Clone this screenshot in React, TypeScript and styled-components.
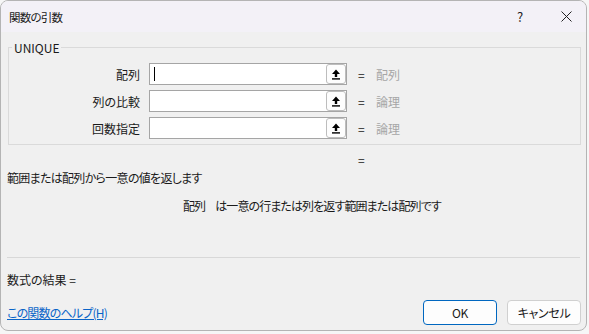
import React from 'react';
import styled, { createGlobalStyle } from 'styled-components';

const GlobalStyle = createGlobalStyle`
  html, body {
    margin: 0;
    padding: 0;
    background: #f6f6f6;
  }
  body {
    font-family: "Noto Sans CJK JP", "Noto Sans", sans-serif;
    font-size: 12px;
    color: #1a1a1a;
    font-feature-settings: "palt";
  }
`;

const Window = styled.div`
  width: 587px;
  height: 331px;
  box-sizing: border-box;
  border: 1px solid #b4b4b4;
  border-radius: 8px;
  overflow: hidden;
  background: #f0f0f0;
  display: flex;
  flex-direction: column;
`;

const TitleBar = styled.div`
  height: 31px;
  flex-shrink: 0;
  display: flex;
  align-items: center;
  padding: 0 0 0 8px;
  background: #f3f1f7;
`;

const Title = styled.div`
  flex: 1;
  font-size: 11.5px;
  letter-spacing: -0.8px;
`;

const TitleButton = styled.div<{ $w: number }>`
  width: ${(p) => p.$w}px;
  height: 31px;
  display: flex;
  align-items: center;
  justify-content: center;
  font-size: 13px;
  color: #222;
`;

const Body = styled.div`
  flex: 1;
  display: flex;
  flex-direction: column;
  padding: 15px 5px 0 5px;
`;

const GroupBox = styled.div`
  position: relative;
  margin-left: 2px;
  border: 1px solid #dadada;
  padding: 15px 0 5px 0;
`;

const Legend = styled.div`
  position: absolute;
  top: -9px;
  left: 3px;
  padding: 0 2px;
  background: #f0f0f0;
  line-height: 18px;
  font-size: 12px;
`;

const ArgGrid = styled.div`
  display: grid;
  grid-template-columns: 131px 198px 11px 1fr;
  column-gap: 9px;
  row-gap: 5px;
  align-items: center;
`;

const ArgLabel = styled.div`
  text-align: right;
  font-size: 12px;
`;

const InputBox = styled.div`
  height: 22px;
  box-sizing: border-box;
  border: 1px solid #a5a5a5;
  background: #fff;
  display: flex;
  align-items: center;
  justify-content: space-between;
`;

const Caret = styled.span`
  width: 1px;
  height: 14px;
  margin-left: 4px;
  background: #000;
`;

const RefButton = styled.div`
  width: 20px;
  height: 20px;
  box-sizing: border-box;
  border: 1px solid #bdbdbd;
  border-radius: 3px;
  background: #fdfdfd;
  display: flex;
  align-items: center;
  justify-content: center;
`;

const Eq = styled.div`
  font-size: 12px;
  padding-left: 2px;
`;

const ArgValue = styled.div`
  color: #a6a6a6;
  font-size: 12px;
`;

const TextLine = styled.div<{ $indent?: number; $top?: number; $tight?: number }>`
  line-height: 18px;
  height: 18px;
  padding-left: ${(p) => p.$indent ?? 1}px;
  margin-top: ${(p) => p.$top ?? 0}px;
  letter-spacing: ${(p) => p.$tight ?? 0}px;
  white-space: pre;
`;

const ArgName = styled.span`
  margin-right: 10px;
`;

const Separator = styled.div`
  height: 1px;
  background: #d8d8d8;
  margin: 42px 1px 0 1px;
`;

const Footer = styled.div`
  display: flex;
  align-items: center;
  margin-top: 11px;
  padding-left: 1px;
`;

const HelpLink = styled.a`
  flex: 1;
  color: #0a64c8;
  text-decoration: underline;
  font-size: 12px;
  letter-spacing: -0.8px;
`;

const DlgButton = styled.button<{ $primary?: boolean }>`
  width: 74px;
  height: 25px;
  box-sizing: border-box;
  margin-left: 10px;
  border-radius: 4px;
  border: 1px solid ${(p) => (p.$primary ? '#0067c0' : '#d0d0d0')};
  background: #fdfdfd;
  font-family: inherit;
  font-size: 12px;
  color: #1a1a1a;
  padding: 0;
  font-feature-settings: "palt";
  letter-spacing: -0.3px;
`;

const Buttons = styled.div`
  display: flex;
`;

function UpArrow() {
  return (
    <svg width="10" height="11" viewBox="0 0 10 11">
      <path d="M5 0.5 L9 5 L6.2 5 L6.2 8 L3.8 8 L3.8 5 L1 5 Z" fill="#000" />
      <rect x="1" y="9.2" width="8" height="1.4" fill="#000" />
    </svg>
  );
}

const args = [
  { name: '配列', value: '配列', caret: true },
  { name: '列の比較', value: '論理' },
  { name: '回数指定', value: '論理' },
];

export default function App() {
  return (
    <>
      <GlobalStyle />
      <Window>
        <TitleBar>
          <Title>関数の引数</Title>
          <TitleButton $w={52}>?</TitleButton>
          <TitleButton $w={40}>
            <svg width="11" height="11" viewBox="0 0 11 11">
              <path d="M0.5 0.5 L10.5 10.5 M10.5 0.5 L0.5 10.5" stroke="#222" strokeWidth="1" />
            </svg>
          </TitleButton>
        </TitleBar>
        <Body>
          <GroupBox>
            <Legend>UNIQUE</Legend>
            <ArgGrid>
              {args.map((a) => (
                <React.Fragment key={a.name}>
                  <ArgLabel>{a.name}</ArgLabel>
                  <InputBox>
                    {a.caret ? <Caret /> : <span />}
                    <RefButton>
                      <UpArrow />
                    </RefButton>
                  </InputBox>
                  <Eq>=</Eq>
                  <ArgValue>{a.value}</ArgValue>
                </React.Fragment>
              ))}
            </ArgGrid>
          </GroupBox>
          <TextLine $indent={352} $top={6}>=</TextLine>
          <TextLine $tight={-0.7}>範囲または配列から一意の値を返します</TextLine>
          <TextLine $indent={177} $top={10} $tight={-0.9}>
            <ArgName>配列</ArgName>は一意の行または列を返す範囲または配列です
          </TextLine>
          <Separator />
          <TextLine $top={13}>数式の結果 =</TextLine>
          <Footer>
            <HelpLink href="#">この関数のヘルプ(H)</HelpLink>
            <Buttons>
              <DlgButton $primary>OK</DlgButton>
              <DlgButton>キャンセル</DlgButton>
            </Buttons>
          </Footer>
        </Body>
      </Window>
    </>
  );
}
